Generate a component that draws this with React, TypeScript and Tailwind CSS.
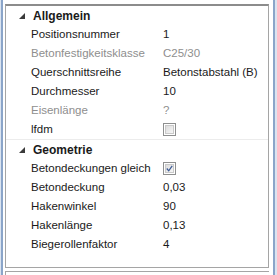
const font = { fontFamily: '"Liberation Sans", Arial, sans-serif' }

type Row = { label: string; value?: string; check?: boolean; disabled?: boolean }

const groups: { title: string; rows: Row[] }[] = [
  {
    title: 'Allgemein',
    rows: [
      { label: 'Positionsnummer', value: '1' },
      { label: 'Betonfestigkeitsklasse', value: 'C25/30', disabled: true },
      { label: 'Querschnittsreihe', value: 'Betonstabstahl (B)' },
      { label: 'Durchmesser', value: '10' },
      { label: 'Eisenlänge', value: '?', disabled: true },
      { label: 'lfdm', check: false },
    ],
  },
  {
    title: 'Geometrie',
    rows: [
      { label: 'Betondeckungen gleich', check: true },
      { label: 'Betondeckung', value: '0,03' },
      { label: 'Hakenwinkel', value: '90' },
      { label: 'Hakenlänge', value: '0,13' },
      { label: 'Biegerollenfaktor', value: '4' },
    ],
  },
]

function CheckBox({ checked }: { checked: boolean }) {
  return (
    <div className="w-[13px] h-[13px] border border-[#8e8f8f] bg-white p-[1px]">
      <div className="w-full h-full border border-[#c9c9c9] bg-gradient-to-br from-[#dcdcdc] to-[#f6f6f6] flex items-center justify-center">
        {checked && (
          <svg width="9" height="9" viewBox="0 0 9 9">
            <path d="M1 4.5 L3.5 7.5 L8 1" fill="none" stroke="#3c5a94" strokeWidth="1.6" />
          </svg>
        )}
      </div>
    </div>
  )
}

function Expander() {
  return (
    <svg width="6" height="6" viewBox="0 0 6 6" className="block">
      <polygon points="6,0 6,6 0,6" fill="#3b3b3b" />
    </svg>
  )
}

export default function App() {
  return (
    <div className="w-[277px] h-[275px] bg-white flex text-[11.5px] text-[#1a1a1a] overflow-hidden" style={font}>
      <div className="flex shrink-0">
        <div className="w-[1px] bg-[#dbe4f0]" />
        <div className="w-[2px] bg-[#8ba5c9]" />
      </div>
      <div className="w-[2px] shrink-0" />
      <div className="flex-1 flex flex-col pt-[4px]">
        <div className="w-[264px] h-[265px] border-t-2 border-t-[#8c8c8c] border-l border-r border-b border-[#a5a5a5] flex flex-col">
          {groups.map((g, gi) => (
            <div key={g.title} className={gi > 0 ? 'border-t border-[#ececec]' : ''}>
              <div className="h-[19px] flex items-center">
                <div className="w-[27px] flex justify-end pr-[8px]">
                  <Expander />
                </div>
                <span className="font-bold text-[12px]">{g.title}</span>
              </div>
              {g.rows.map(r => (
                <div key={r.label} className="h-[19px] flex items-center">
                  <div className={`w-[156px] shrink-0 pl-[25px] whitespace-nowrap ${r.disabled ? 'text-[#8e8e8e]' : ''}`}>
                    {r.label}
                  </div>
                  <div className={`pl-[1px] whitespace-nowrap ${r.disabled ? 'text-[#8e8e8e]' : ''}`}>
                    {r.check !== undefined ? <CheckBox checked={r.check} /> : r.value}
                  </div>
                </div>
              ))}
            </div>
          ))}
        </div>
        <div className="mt-[3px] border-t border-[#a5a5a5] border-l h-[4px]" />
      </div>
      <div className="w-[4px] shrink-0" />
      <div className="flex shrink-0">
        <div className="w-[2px] bg-[#8ba5c9]" />
        <div className="w-[2px] bg-[#dbe4f0]" />
      </div>
    </div>
  )
}
